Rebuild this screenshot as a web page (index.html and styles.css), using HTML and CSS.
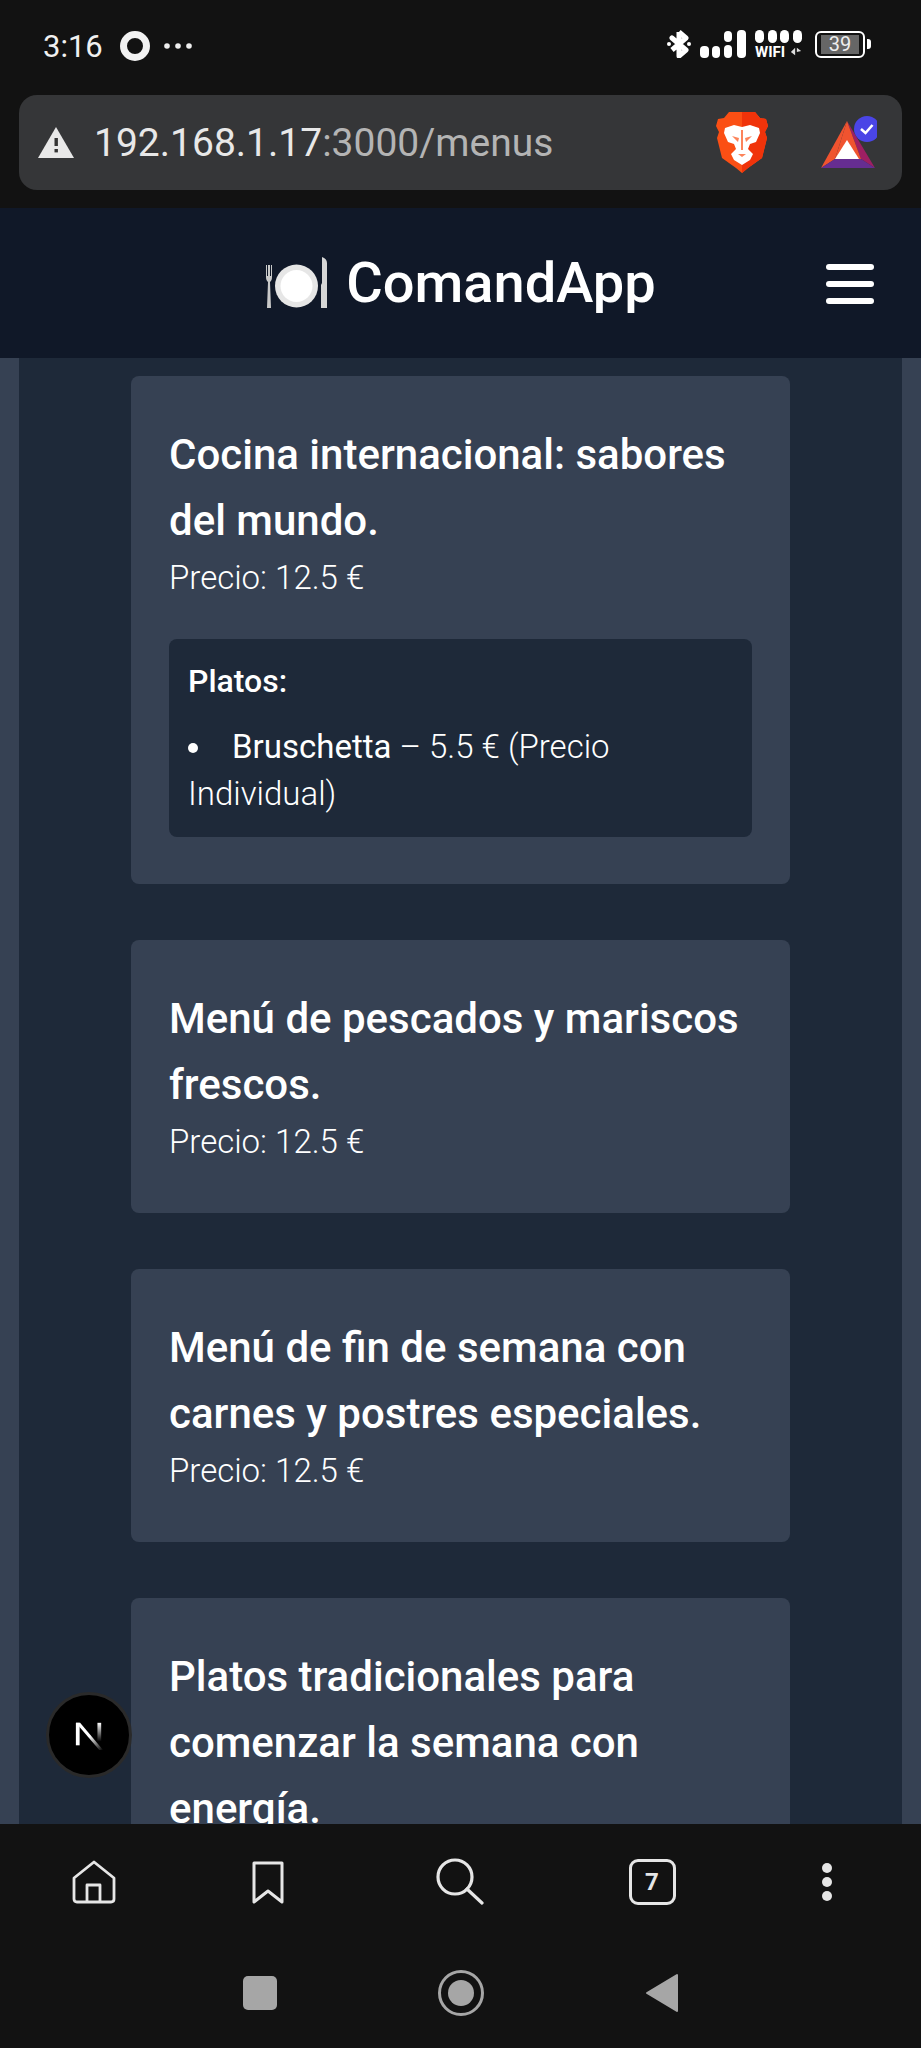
FILE: index.html
```html
<!DOCTYPE html>
<html lang="es">
<head>
    <meta charset="utf-8">
    <title>ComandApp</title>
    <link rel="stylesheet" href="styles.css">
</head>
<body>
    <div class="status-bar">
        <div class="status-left">
            <span class="time">3:16</span>
            <svg class="ring" width="30" height="30" viewBox="0 0 30 30"><circle cx="15" cy="15" r="11.5" fill="none" stroke="#f2f2f2" stroke-width="7"/></svg>
            <svg class="more" width="28" height="6" viewBox="0 0 28 6"><circle cx="3" cy="3" r="2.8" fill="#eee"/><circle cx="14" cy="3" r="2.8" fill="#eee"/><circle cx="25" cy="3" r="2.8" fill="#eee"/></svg>
        </div>
        <div class="status-right">
            <svg width="24" height="28" viewBox="0 0 24 28">
                <path d="M12 2v24l7-6-14-12 14 12M12 2l7 6-14 12" fill="none" stroke="#fff" stroke-width="5" stroke-linejoin="round"/>
                <circle cx="2" cy="14" r="2" fill="#fff"/><circle cx="22" cy="14" r="2" fill="#fff"/>
            </svg>
            <svg class="signal" width="46" height="28" viewBox="0 0 46 28" fill="#fff">
                <rect x="0" y="16" width="9" height="12" rx="4"/><rect x="12" y="16" width="8" height="12" rx="4"/><rect x="24" y="1" width="8" height="11" rx="4"/><rect x="24" y="15" width="8" height="13" rx="4"/><rect x="37" y="0" width="9" height="28" rx="4"/>
            </svg>
            <div class="wifi">
                <div class="wifi-dots"><i></i><i></i><i></i><i></i></div>
                <div class="wifi-label">WIFI<svg width="12" height="9" viewBox="0 0 14 9" fill="#ddd"><path d="M6 0v9L1 5zM8 0l5 4-5 1z"/></svg></div>
            </div>
            <div class="battery"><span class="battery-level">39</span></div>
        </div>
    </div>

    <div class="url-wrap">
        <div class="url-bar">
            <svg class="warn" width="36" height="31" viewBox="0 0 36 31"><path d="M18 0 36 31H0z" fill="#e8e8e8"/><rect x="16.5" y="11" width="3.4" height="8" fill="#333"/><rect x="16.5" y="22" width="3.4" height="3.4" fill="#333"/></svg>
            <span class="url"><span class="url-host">192.168.1.17</span>:3000/menus</span>
            <svg class="brave" width="52" height="61" viewBox="0 0 52 61">
                <path d="M13 0h26l5 6 6 1 2 7-3 6 2 6-5 20-14 10-6 5-6-5-14-10L1 26l2-6-3-6 2-7 6-1z" fill="#fb4f14"/>
                <path d="M26 0h13l5 6 6 1 2 7-3 6 2 6-5 20-14 10-6 5z" fill="#f0330a"/>
                <path d="M9 16l9-3 8 2 8-2 9 3 1 5-4 9-6 2-2 5 5 5-3 6-8 5-8-5-3-6 5-5-2-5-6-2-4-9z" fill="#fff"/>
                <path d="M16 24l7 2-1 4zM36 24l-7 2 1 4zM22 42h8l-4 3zM25 18h2v20h-2z" fill="#fb4f14" opacity=".7"/>
            </svg>
            <svg class="bat" width="56" height="54" viewBox="0 0 56 54">
                <path d="M26 5 0 52l14-9z" fill="#f0532f"/>
                <path d="M26 5 54 52 40 43z" fill="#9e1f63"/>
                <path d="M0 52h54l-14-9H14z" fill="#662d91"/>
                <path d="M26 5 40 43H14z" fill="#f0532f"/>
                <path d="M26 24 38 43H14z" fill="#fff"/>
                <circle cx="46" cy="13" r="13" fill="#4a45e6"/>
                <path d="M40 13l4.500 4 7-8" fill="none" stroke="#fff" stroke-width="2.600"/>
            </svg>
        </div>
    </div>

    <header class="app-header">
        <div class="brand">
            <svg class="plate" width="63" height="52" viewBox="0 0 63 52">
                <path d="M1 8v12c0 3 1 4 2 5L2 51h4L5 25c1-1 2-2 2-5V8H6v11H5V8H3v11H2V8z" fill="#c9c9c9"/>
                <circle cx="31.500" cy="29" r="21.500" fill="#e6e6e6"/>
                <circle cx="31.500" cy="29" r="16" fill="#fff"/>
                <path d="M57 0c3 1 5 3 5 6v45h-6V28l1-2z" fill="#d6d6d6"/>
            </svg>
            <span class="brand-name">ComandApp</span>
        </div>
        <div class="hamburger"><i></i><i></i><i></i></div>
    </header>

    <main class="content">
        <div class="column">
            <article class="menu-card">
                <h2 class="menu-title">Cocina internacional: sabores del mundo.</h2>
                <p class="menu-price">Precio: 12.5 €</p>
                <div class="dishes">
                    <h3 class="dishes-title">Platos:</h3>
                    <ul class="dish-list">
                        <li><strong>Bruschetta</strong> – 5.5 € (Precio Individual)</li>
                    </ul>
                </div>
            </article>
            <article class="menu-card">
                <h2 class="menu-title">Menú de pescados y mariscos frescos.</h2>
                <p class="menu-price">Precio: 12.5 €</p>
            </article>
            <article class="menu-card">
                <h2 class="menu-title">Menú de fin de semana con carnes y postres especiales.</h2>
                <p class="menu-price">Precio: 12.5 €</p>
            </article>
            <article class="menu-card">
                <h2 class="menu-title">Platos tradicionales para comenzar la semana con energía.</h2>
                <p class="menu-price">Precio: 12.5 €</p>
            </article>
        </div>
        <div class="next-badge">
            <svg width="30" height="30" viewBox="0 0 32 32">
                <defs><linearGradient id="fade" x1="0" y1="0" x2="1" y2="1"><stop offset=".5" stop-color="#fff"/><stop offset="1" stop-color="#fff" stop-opacity="0"/></linearGradient>
                <linearGradient id="fade2" x1="0" y1="0" x2="0" y2="1"><stop offset="0" stop-color="#fff"/><stop offset="1" stop-color="#fff" stop-opacity="0"/></linearGradient></defs>
                <path d="M2 3h4v24H2z" fill="#fff"/>
                <path d="M2 3h4.500L31 32h-4z" fill="url(#fade)"/>
                <path d="M25 3h4v20h-4z" fill="url(#fade2)"/>
            </svg>
        </div>
    </main>

    <nav class="browser-nav">
        <svg width="44" height="44" viewBox="0 0 44 44" fill="none" stroke="#e6e6e6" stroke-width="2.800" stroke-linejoin="round"><path d="M2 18 22 2l20 16v21c0 2-1 3-3 3H5c-2 0-3-1-3-3z"/><path d="M15 42V25h13v17"/></svg>
        <svg width="32" height="43" viewBox="0 0 32 43" fill="none" stroke="#e6e6e6" stroke-width="3" stroke-linejoin="round"><path d="M2 2h28v39L16 30 2 41z"/></svg>
        <svg width="48" height="48" viewBox="0 0 48 48" fill="none" stroke="#e6e6e6" stroke-width="3.200" stroke-linecap="round"><circle cx="19" cy="19" r="17"/><path d="M31 31l15 14"/></svg>
        <div class="tab-count">7</div>
        <svg width="10" height="38" viewBox="0 0 10 38" fill="#e6e6e6"><circle cx="5" cy="5" r="5"/><circle cx="5" cy="19" r="5"/><circle cx="5" cy="33" r="5"/></svg>
    </nav>
    <div class="system-nav">
        <div class="sys-square"></div>
        <svg width="46" height="46" viewBox="0 0 46 46"><circle cx="23" cy="23" r="21.500" fill="none" stroke="#a6a6a6" stroke-width="3"/><circle cx="23" cy="23" r="13" fill="#a6a6a6"/></svg>
        <svg width="34" height="40" viewBox="0 0 34 40"><path d="M32 2v36L2 20z" fill="#a6a6a6" stroke="#a6a6a6" stroke-width="2" stroke-linejoin="round"/></svg>
    </div>
</body>
</html>
```

FILE: styles.css
```css
* {
    box-sizing: border-box;
}
html, body {
    margin: 0;
    height: 2048px;
    overflow: hidden;
}
body {
    display: flex;
    flex-direction: column;
    font-family: Roboto, "Noto Sans", sans-serif;
    background-color: #121212;
    color: #fff;
}

/* android status bar */
.status-bar {
    height: 95px;
    flex: none;
    display: flex;
    justify-content: space-between;
    align-items: flex-start;
    padding: 29px 56px 0 43px;
}
.status-left {
    display: flex;
    align-items: center;
    gap: 17px;
    height: 34px;
}
.time {
    font-size: 31px;
    color: #f0f0f0;
}
.more {
    margin-left: -3px;
}
.status-right {
    display: flex;
    align-items: center;
    gap: 9px;
    height: 30px;
}
.wifi {
    width: 47px;
}
.wifi-dots {
    display: flex;
    justify-content: space-between;
}
.wifi-dots i {
    width: 9px;
    height: 13px;
    border-radius: 5px;
    background-color: #fff;
}
.wifi-label {
    display: flex;
    align-items: center;
    justify-content: space-between;
    font-size: 15px;
    line-height: 14px;
    font-weight: 700;
    margin-top: 2px;
}
.battery {
    position: relative;
    width: 50px;
    height: 27px;
    margin-left: 4px;
    border: 2px solid #fff;
    border-radius: 6px;
    padding: 2px 4px;
}
.battery::after {
    content: "";
    position: absolute;
    right: -8px;
    top: 6px;
    width: 4px;
    height: 10px;
    background-color: #fff;
    border-radius: 0 3px 3px 0;
}
.battery-level {
    display: block;
    height: 19px;
    background-color: #666;
    color: #eee;
    font-size: 20px;
    line-height: 19px;
    text-align: center;
}

/* browser address bar */
.url-wrap {
    height: 113px;
    flex: none;
    padding: 0 19px;
}
.url-bar {
    height: 95px;
    display: flex;
    align-items: center;
    padding-left: 19px;
    background-color: #353638;
    border-radius: 18px;
}
.url {
    margin-left: 20px;
    font-size: 39px;
    color: #b4b4b4;
    width: 622px;
}
.url-host {
    color: #e8e8e8;
}
.brave {
    flex: none;
}
.bat {
    flex: none;
    margin-left: 53px;
}

/* page header */
.app-header {
    height: 150px;
    flex: none;
    position: relative;
    display: flex;
    align-items: center;
    justify-content: center;
    background-color: #101828;
}
.brand {
    display: flex;
    align-items: center;
    gap: 18px;
}
.brand-name {
    font-size: 56px;
    font-weight: 500;
}
.hamburger {
    position: absolute;
    right: 47px;
    top: 56px;
    width: 48px;
}
.hamburger i {
    display: block;
    height: 6px;
    margin-bottom: 11px;
    background-color: #fff;
    border-radius: 3px;
}

/* page content */
.content {
    flex: 1;
    position: relative;
    overflow: hidden;
    padding: 0 19px;
    background-color: #364153;
}
.column {
    height: 100%;
    padding-top: 18px;
    background-color: #1e2939;
}
.menu-card {
    width: 659px;
    margin: 0 auto 56px;
    padding: 46px 38px 47px;
    background-color: #364153;
    border-radius: 8px;
}
.menu-title {
    margin: 0;
    font-size: 42px;
    line-height: 66px;
    font-weight: 500;
}
.menu-price {
    margin: 0;
    font-size: 33px;
    line-height: 48px;
    font-weight: 300;
}
.dishes {
    margin-top: 37px;
    padding: 20px 19px;
    background-color: #1e2939;
    border-radius: 8px;
}
.dishes-title {
    margin: 0 0 20px;
    font-size: 32px;
    line-height: 44px;
    font-weight: 500;
}
.dish-list {
    margin: 0;
    padding: 0;
    list-style: disc inside;
    font-size: 33px;
    line-height: 47px;
    font-weight: 300;
}
.dish-list strong {
    font-weight: 400;
}
.next-badge {
    position: absolute;
    left: 46px;
    top: 1334px;
    width: 86px;
    height: 86px;
    display: flex;
    align-items: center;
    justify-content: center;
    background-color: #000;
    border: 3px solid #2a2a2a;
    border-radius: 50%;
}

/* browser toolbar + android buttons */
.browser-nav {
    height: 112px;
    flex: none;
    display: grid;
    grid-template-columns: 174px 174px 210px 174px 176px;
    padding: 34px 0 32px 7px;
    justify-items: center;
    align-items: center;
}
.tab-count {
    width: 47px;
    height: 46px;
    border: 3px solid #e6e6e6;
    border-radius: 9px;
    font-size: 24px;
    font-weight: 700;
    line-height: 40px;
    text-align: center;
    color: #e6e6e6;
}
.system-nav {
    height: 112px;
    flex: none;
    display: flex;
    align-items: center;
    justify-content: center;
    gap: 161px;
    padding-top: 2px;
}
.sys-square {
    width: 34px;
    height: 34px;
    background-color: #a6a6a6;
    border-radius: 5px;
}
```
